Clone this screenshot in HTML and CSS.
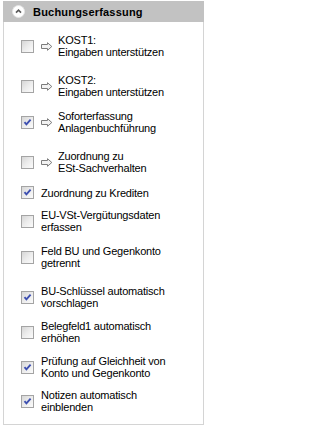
FILE: index.html
```html
<!DOCTYPE html>
<html lang="de">
<head>
<meta charset="utf-8">
<title>Buchungserfassung</title>
<link rel="stylesheet" href="styles.css">
</head>
<body>
<section class="panel">
  <header class="panel-head">
    <span class="collapse-btn">
      <svg width="13" height="13" viewBox="0 0 13 13"><circle cx="6.5" cy="6.5" r="6" fill="#ffffff" stroke="#e4e4e4" stroke-width="1"/><path d="M4 7.6 L6.5 5.1 L9 7.6" fill="none" stroke="#5a5a5a" stroke-width="1.6"/></svg>
    </span>
    <span class="panel-title">Buchungserfassung</span>
  </header>
  <div class="panel-body">
    <label class="row">
      <span class="cb"></span>
      <span class="arrow"><svg width="12" height="9" viewBox="0 0 12 9"><path d="M0.5 2.5 H6.5 V0.7 L10.8 4.5 L6.5 8.3 V6.5 H0.5 Z" fill="#f2f2f2" stroke="#7c7c7c" stroke-width="1"/></svg></span>
      <span class="lbl">KOST1:<br>Eingaben unterstützen</span>
    </label>
    <label class="row row--loose">
      <span class="cb"></span>
      <span class="arrow"><svg width="12" height="9" viewBox="0 0 12 9"><path d="M0.5 2.5 H6.5 V0.7 L10.8 4.5 L6.5 8.3 V6.5 H0.5 Z" fill="#f2f2f2" stroke="#7c7c7c" stroke-width="1"/></svg></span>
      <span class="lbl">KOST2:<br>Eingaben unterstützen</span>
    </label>
    <label class="row">
      <span class="cb cb--on"><svg width="11" height="11" viewBox="0 0 11 11"><path d="M2.5 5.2 L4.4 7.3 L8.6 2.6" fill="none" stroke="#3d4fb0" stroke-width="1.9"/></svg></span>
      <span class="arrow"><svg width="12" height="9" viewBox="0 0 12 9"><path d="M0.5 2.5 H6.5 V0.7 L10.8 4.5 L6.5 8.3 V6.5 H0.5 Z" fill="#f2f2f2" stroke="#7c7c7c" stroke-width="1"/></svg></span>
      <span class="lbl">Soforterfassung<br>Anlagenbuchführung</span>
    </label>
    <label class="row row--loose">
      <span class="cb"></span>
      <span class="arrow"><svg width="12" height="9" viewBox="0 0 12 9"><path d="M0.5 2.5 H6.5 V0.7 L10.8 4.5 L6.5 8.3 V6.5 H0.5 Z" fill="#f2f2f2" stroke="#7c7c7c" stroke-width="1"/></svg></span>
      <span class="lbl">Zuordnung zu<br>ESt-Sachverhalten</span>
    </label>
    <label class="row row--single">
      <span class="cb cb--on"><svg width="11" height="11" viewBox="0 0 11 11"><path d="M2.5 5.2 L4.4 7.3 L8.6 2.6" fill="none" stroke="#3d4fb0" stroke-width="1.9"/></svg></span>
      <span class="lbl">Zuordnung zu Krediten</span>
    </label>
    <label class="row row--tight">
      <span class="cb"></span>
      <span class="lbl">EU-VSt-Vergütungsdaten<br>erfassen</span>
    </label>
    <label class="row">
      <span class="cb"></span>
      <span class="lbl">Feld BU und Gegenkonto<br>getrennt</span>
    </label>
    <label class="row row--loose">
      <span class="cb cb--on"><svg width="11" height="11" viewBox="0 0 11 11"><path d="M2.5 5.2 L4.4 7.3 L8.6 2.6" fill="none" stroke="#3d4fb0" stroke-width="1.9"/></svg></span>
      <span class="lbl">BU-Schlüssel automatisch<br>vorschlagen</span>
    </label>
    <label class="row row--snug">
      <span class="cb"></span>
      <span class="lbl">Belegfeld1 automatisch<br>erhöhen</span>
    </label>
    <label class="row row--snug">
      <span class="cb cb--on"><svg width="11" height="11" viewBox="0 0 11 11"><path d="M2.5 5.2 L4.4 7.3 L8.6 2.6" fill="none" stroke="#3d4fb0" stroke-width="1.9"/></svg></span>
      <span class="lbl">Prüfung auf Gleichheit von<br>Konto und Gegenkonto</span>
    </label>
    <label class="row row--tight">
      <span class="cb cb--on"><svg width="11" height="11" viewBox="0 0 11 11"><path d="M2.5 5.2 L4.4 7.3 L8.6 2.6" fill="none" stroke="#3d4fb0" stroke-width="1.9"/></svg></span>
      <span class="lbl">Notizen automatisch<br>einblenden</span>
    </label>
  </div>
</section>
</body>
</html>
```

FILE: styles.css
```css
html, body {
  margin: 0;
  padding: 0;
  background: #ffffff;
}

body {
  padding: 1px 1px 0 3px;
  font-family: "Liberation Sans", Arial, sans-serif;
  font-size: 11px;
  color: #000000;
}

.panel {
  width: 201px;
  box-sizing: border-box;
  border: 1px solid #d4d4d4;
  border-top: none;
  background: #ffffff;
}

.panel-head {
  display: flex;
  align-items: center;
  height: 21px;
  margin: 0 -1px;
  padding-left: 9px;
  background: #c2c2c2;
}

.collapse-btn {
  display: flex;
  width: 13px;
  height: 13px;
}

.panel-title {
  margin-left: 8px;
  font-weight: bold;
  font-size: 11px;
  letter-spacing: 0.2px;
  color: #000000;
}

.panel-body {
  display: flex;
  flex-direction: column;
  padding: 12px 0 11px 17px;
}

.row {
  display: flex;
  align-items: center;
  margin-top: 12px;
}

.row:first-child {
  margin-top: 0;
}

.row--loose { margin-top: 16px; }
.row--snug { margin-top: 11px; }
.row--tight { margin-top: 10px; }

.cb {
  flex: none;
  display: flex;
  align-items: center;
  justify-content: center;
  width: 13px;
  height: 13px;
  box-sizing: border-box;
  border: 1px solid #a4a4a4;
  background: linear-gradient(135deg, #d6d6d6 0%, #ececec 50%, #fbfbfb 100%);
}

.arrow {
  flex: none;
  display: flex;
  margin-left: 7px;
}

.lbl {
  margin-left: 7px;
  line-height: 12px;
  letter-spacing: -0.2px;
  white-space: nowrap;
}

.arrow + .lbl {
  margin-left: 5px;
}
```
